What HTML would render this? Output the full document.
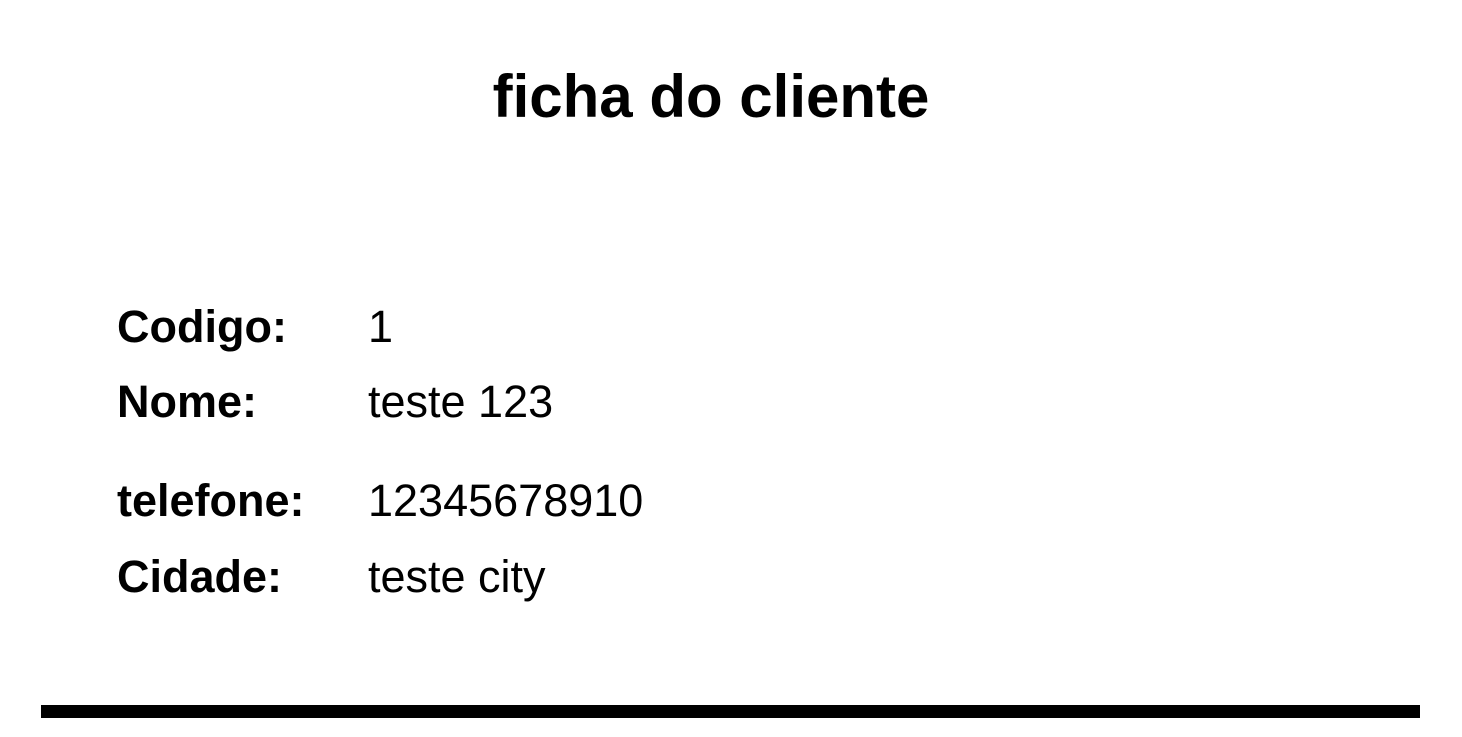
<!DOCTYPE html>
<html><head><style>
body{margin:0;width:1462px;height:737px;background:#fff;font-family:"Liberation Sans",sans-serif;color:#000;position:relative;overflow:hidden}
h1{position:absolute;left:0;width:1422px;top:65px;margin:0;text-align:center;font-size:60px;line-height:64px;font-weight:bold}
.l{position:absolute;left:117px;font-size:45px;font-weight:bold;line-height:48px}
.v{position:absolute;left:368px;font-size:45px;line-height:48px}
.bar{position:absolute;left:41px;top:705px;width:1379px;height:13px;background:#000}
</style></head><body>
<h1>ficha do cliente</h1>
<div class="l" style="top:303px">Codigo:</div><div class="v" style="top:303px">1</div>
<div class="l" style="top:378px">Nome:</div><div class="v" style="top:378px">teste 123</div>
<div class="l" style="top:477px">telefone:</div><div class="v" style="top:477px">12345678910</div>
<div class="l" style="top:553px">Cidade:</div><div class="v" style="top:553px">teste city</div>
<div class="bar"></div>
</body></html>
